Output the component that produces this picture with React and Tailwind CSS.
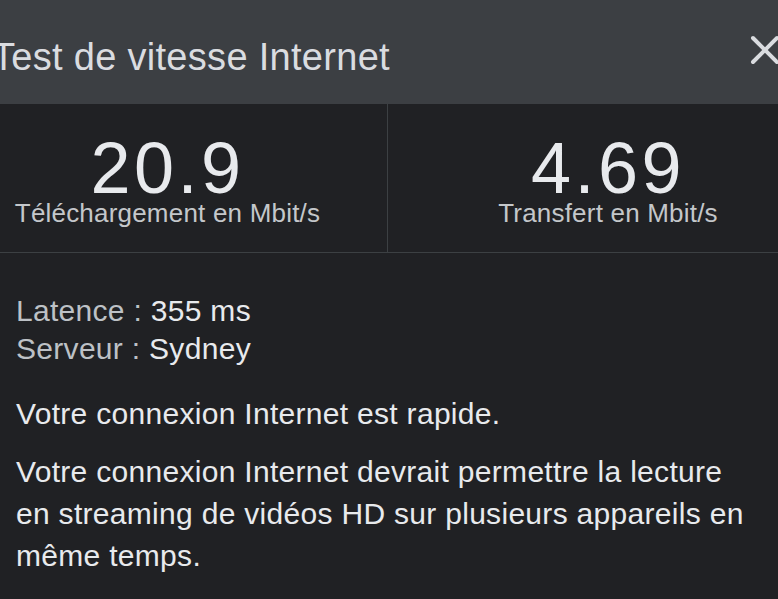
import { X } from 'lucide-react';

const Stat = ({ value, label, divider }) => (
  <div className={`flex flex-col items-center pt-[30px] pb-[28px] ${divider ? 'border-r border-[#3c4043]' : ''}`}>
    <div className="text-[72px] leading-[68px] tracking-[3.5px] text-[#e8eaed]">{value}</div>
    <div className="text-[26px] leading-[22px] tracking-[0.2px] text-[#c4c7ca]">{label}</div>
  </div>
);

const App = () => {
  return (
    <div className="w-[778px] h-[599px] overflow-hidden bg-[#202124] font-['Liberation_Sans',Arial,sans-serif]">
      <div className="ml-[-52px] w-[880px]">
        {/* Header */}
        <div className="h-[104px] bg-[#3c3f43] flex items-start justify-between pl-[44px] pr-[39px] pt-[38px]">
          <h1 className="text-[38px] leading-[38px] tracking-[0.3px] text-[#dadce0]">Test de vitesse Internet</h1>
          <X className="w-[48px] h-[48px] mt-[-12px] text-[#dadce0]" strokeWidth={2} />
        </div>

        {/* Speeds */}
        <div className="grid grid-cols-2 border-b border-[#3c4043]">
          <Stat value="20.9" label="Téléchargement en Mbit/s" divider />
          <Stat value="4.69" label="Transfert en Mbit/s" />
        </div>

        {/* Details */}
        <div className="pl-[68px] pt-[39px] text-[30px] tracking-[0.3px] text-[#e8eaed]">
          <div className="leading-[38px]">
            <p><span className="text-[#bdc1c6]">Latence : </span>355 ms</p>
            <p><span className="text-[#bdc1c6]">Serveur : </span>Sydney</p>
          </div>
          <p className="leading-[42px] mt-[25px]">Votre connexion Internet est rapide.</p>
          <p className="leading-[42px] mt-[16px] w-[735px]">
            Votre connexion Internet devrait permettre la lecture en streaming de vidéos HD sur plusieurs appareils en même temps.
          </p>
        </div>
      </div>
    </div>
  );
};

export default App;
